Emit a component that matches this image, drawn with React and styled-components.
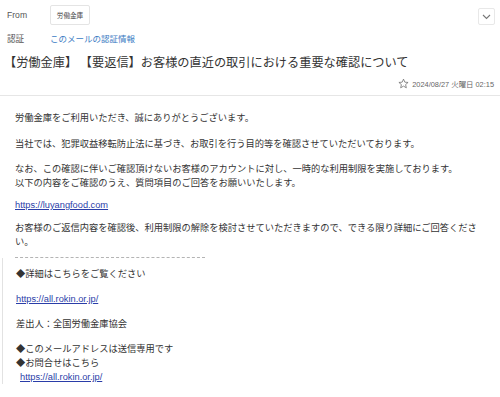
import React from "react";
import styled, { createGlobalStyle } from "styled-components";

const GlobalStyle = createGlobalStyle`
  html, body {
    margin: 0;
    padding: 0;
    background: #ffffff;
  }
  body {
    font-family: "Liberation Sans", "Noto Sans CJK JP", sans-serif;
    color: #333333;
  }
`;

//////////
// STYLE
//////////

const Page = styled.div`
  width: 500px;
  height: 397px;
  overflow: hidden;
  background: #ffffff;
`;

const Header = styled.header`
  padding: 5px 5px 0 7px;
  border-bottom: 1px solid #e6e6e6;
  height: 96px;
  box-sizing: border-box;
`;

const MetaRow = styled.div`
  display: flex;
  align-items: center;
  height: ${(p) => p.h || 20}px;
`;

const MetaLabel = styled.span`
  width: 43px;
  font-size: 8.6px;
  color: #555555;
`;

const SenderChip = styled.span`
  display: inline-flex;
  align-items: center;
  justify-content: center;
  width: 40px;
  height: 20px;
  box-sizing: border-box;
  border: 1px solid #e4e4e4;
  border-radius: 2px;
  font-size: 6.6px;
  color: #444444;
`;

const Spacer = styled.div`
  flex: 1;
`;

const ExpandButton = styled.button`
  width: 17px;
  height: 17px;
  padding: 0;
  margin-top: 3px;
  display: flex;
  align-items: center;
  justify-content: center;
  background: #ffffff;
  border: 1px solid #e8e8e8;
  border-radius: 2px;
`;

const AuthLink = styled.a`
  font-size: 8.5px;
  color: #3b7cc4;
  text-decoration: none;
`;

const Title = styled.h1`
  margin: 2px 0 0 -3px;
  font-size: 12.2px;
  font-weight: normal;
  line-height: 18px;
  color: #333333;
  white-space: nowrap;
  font-family: "Noto Sans CJK JP", sans-serif;
`;

const DateRow = styled.div`
  display: flex;
  justify-content: flex-end;
  align-items: center;
  gap: 3px;
  margin-top: 7px;
  padding-right: 1px;
  font-size: 7.4px;
  color: #666666;
`;

const Body = styled.main`
  padding: 15px 15px 0 15px;
  font-size: 9.25px;
  line-height: 14px;
  color: #333333;
`;

const P = styled.p`
  margin: 0 0 ${(p) => (p.gap !== undefined ? p.gap : 11)}px;
`;

const Link = styled.a`
  color: #2a3da8;
  text-decoration: underline;
  font-family: "Liberation Sans", sans-serif;
  padding-left: ${(p) => p.indent || 0}px;
`;

const Rule = styled.div`
  width: 190px;
  border-top: 1px dashed #b4b4b4;
  margin: 5px 0 0;
`;

const Footer = styled.div`
  margin-left: -13px;
  padding: 9px 0 0 13px;
  border-left: 1px solid #e2e2e2;
`;

//////////
// REACT
//////////

const Chevron = () => (
  <svg width="9" height="6" viewBox="0 0 9 6">
    <path d="M1 1l3.5 3.5L8 1" fill="none" stroke="#777" strokeWidth="1.1" />
  </svg>
);

const Star = () => (
  <svg width="11" height="11" viewBox="0 0 24 24">
    <path
      d="M12 2.5l2.9 6.6 7.1.6-5.4 4.7 1.6 7-6.2-3.7-6.2 3.7 1.6-7L2 9.7l7.1-.6z"
      fill="none"
      stroke="#666"
      strokeWidth="1.6"
      strokeLinejoin="round"
    />
  </svg>
);

const App = () => {
  return (
    <Page>
      <GlobalStyle />
      <Header>
        <MetaRow>
          <MetaLabel>From</MetaLabel>
          <SenderChip>労働金庫</SenderChip>
          <Spacer />
          <ExpandButton>
            <Chevron />
          </ExpandButton>
        </MetaRow>
        <MetaRow h={26}>
          <MetaLabel>認証</MetaLabel>
          <AuthLink href="#">このメールの認証情報</AuthLink>
        </MetaRow>
        <Title>【労働金庫】 【要返信】お客様の直近の取引における重要な確認について</Title>
        <DateRow>
          <Star />
          <span>2024/08/27 火曜日 02:15</span>
        </DateRow>
      </Header>
      <Body>
        <P gap={12}>労働金庫をご利用いただき、誠にありがとうございます。</P>
        <P>当社では、犯罪収益移転防止法に基づき、お取引を行う目的等を確認させていただいております。</P>
        <P gap={8}>
          なお、この確認に伴いご確認頂けないお客様のアカウントに対し、一時的な利用制限を実施しております。
          <br />
          以下の内容をご確認のうえ、質問項目のご回答をお願いいたします。
        </P>
        <P gap={9}>
          <Link href="#">https://luyangfood.com</Link>
        </P>
        <P gap={8}>
          お客様のご返信内容を確認後、利用制限の解除を検討させていただきますので、できる限り詳細にご回答ください。
        </P>
        <Rule />
        <Footer>
          <P>◆詳細はこちらをご覧ください</P>
          <P>
            <Link href="#">https://all.rokin.or.jp/</Link>
          </P>
          <P>差出人：全国労働金庫協会</P>
          <P>
            ◆このメールアドレスは送信専用です
            <br />
            ◆お問合せはこちら
            <br />
            <Link href="#" indent={4}>https://all.rokin.or.jp/</Link>
          </P>
        </Footer>
      </Body>
    </Page>
  );
};

export default App;
